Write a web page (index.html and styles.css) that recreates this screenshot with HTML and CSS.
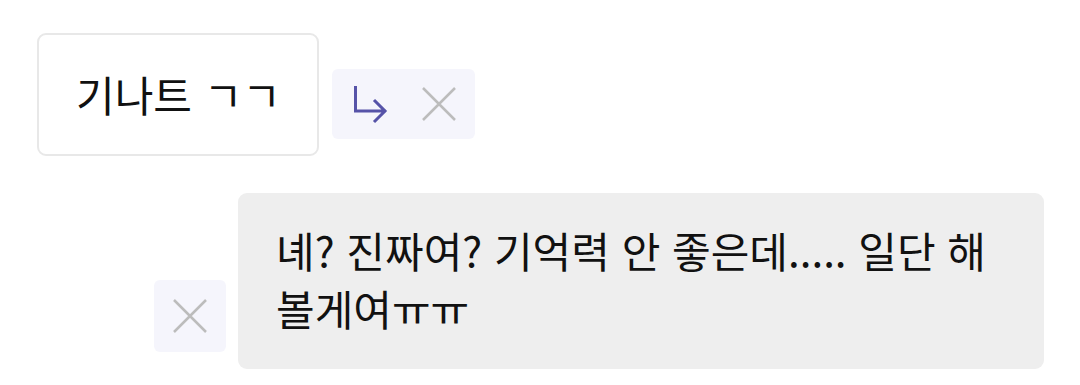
FILE: index.html
```html
<!DOCTYPE html>
<html lang="ko">
<head>
    <meta charset="UTF-8">
    <title>채팅</title>
    <link rel="stylesheet" href="styles.css">
</head>
<body>
<div class="chat">
    <div class="row">
        <div class="msg mine">기나트 ㄱㄱ</div>
        <div class="actions">
            <button class="icon-btn" title="답장">
                <svg width="40" height="40" viewBox="0 0 40 40">
                    <path d="M7.5 2 V27 H38 M26 16 L37 27 L26 38" fill="none" stroke="#5653a8" stroke-width="3"/>
                </svg>
            </button>
            <button class="icon-btn" title="삭제">
                <svg width="40" height="40" viewBox="0 0 40 40">
                    <path d="M4 4 L36 36 M36 4 L4 36" fill="none" stroke="#bcbcbc" stroke-width="2.5"/>
                </svg>
            </button>
        </div>
    </div>
    <div class="row right">
        <div class="actions">
            <button class="icon-btn tall" title="삭제">
                <svg width="40" height="40" viewBox="0 0 40 40">
                    <path d="M4 4 L36 36 M36 4 L4 36" fill="none" stroke="#bcbcbc" stroke-width="2.5"/>
                </svg>
            </button>
        </div>
        <div class="msg other">녜? 진짜여? 기억력 안 좋은데..... 일단 해 볼게여ㅠㅠ</div>
    </div>
</div>
</body>
</html>
```

FILE: styles.css
```css
body {
    margin: 0;
    background: #ffffff;
    font-family: "Noto Sans CJK KR", "Noto Sans", sans-serif;
    color: #111111;
}

.chat {
    padding: 33px 36px 0 37px;
    display: flex;
    flex-direction: column;
    gap: 37px;
}

.row {
    display: flex;
    align-items: flex-end;
    gap: 13px;
}

.row.right {
    justify-content: flex-end;
    gap: 12px;
}

.msg {
    font-size: 42px;
    line-height: 58px;
    border-radius: 9px;
    word-break: keep-all;
}

.mine {
    background: #ffffff;
    border: 2px solid #e8e8e8;
    padding: 30px 36px 31px 37px;
}

.other {
    background: #eeeeee;
    width: 730px;
    padding: 28px 38px 32px 38px;
}

.actions {
    display: flex;
    background: #f5f5fc;
    border-radius: 6px;
    margin-bottom: 17px;
}

.icon-btn {
    width: 71.5px;
    height: 70px;
    border: 0;
    padding: 0;
    background: none;
    display: flex;
    align-items: center;
    justify-content: center;
    cursor: pointer;
}

.icon-btn.tall {
    width: 72px;
    height: 72px;
}
```
